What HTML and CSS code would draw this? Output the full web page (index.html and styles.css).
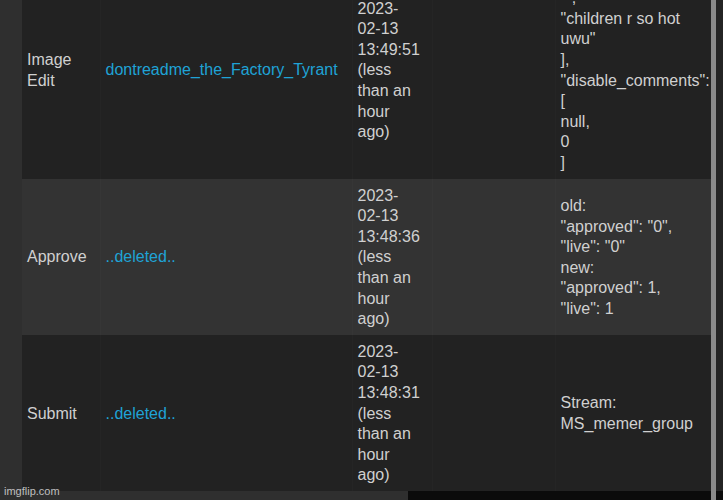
FILE: index.html
```html
<!DOCTYPE html>
<html>
<head>
<meta charset="utf-8">
<title>Moderation log</title>
<link rel="stylesheet" href="styles.css">
</head>
<body>
<div class="screen">
  <div class="left-col">
    <div class="pane">
      <table class="log">
        <colgroup>
          <col class="c-action">
          <col class="c-user">
          <col class="c-time">
          <col class="c-blank">
          <col class="c-data">
        </colgroup>
        <tbody>
          <tr class="row dark">
            <td class="cell">Image Edit</td>
            <td class="cell"><a class="link" href="#">dontreadme_the_Factory_Tyrant</a></td>
            <td class="cell time">2023-02-13 13:49:51 (less than an hour ago)</td>
            <td class="cell"></td>
            <td class="cell data">
              <div>"tags": [</div>
              <div>"",</div>
              <div>"children r so hot uwu"</div>
              <div>],</div>
              <div>"disable_comments":</div>
              <div>[</div>
              <div>null,</div>
              <div>0</div>
              <div>]</div>
            </td>
          </tr>
          <tr class="row light">
            <td class="cell">Approve</td>
            <td class="cell"><a class="link" href="#">..deleted..</a></td>
            <td class="cell time">2023-02-13 13:48:36 (less than an hour ago)</td>
            <td class="cell"></td>
            <td class="cell data">
              <div>old:</div>
              <div>"approved": "0",</div>
              <div>"live": "0"</div>
              <div>new:</div>
              <div>"approved": 1,</div>
              <div>"live": 1</div>
            </td>
          </tr>
          <tr class="row dark">
            <td class="cell">Submit</td>
            <td class="cell"><a class="link" href="#">..deleted..</a></td>
            <td class="cell time">2023-02-13 13:48:31 (less than an hour ago)</td>
            <td class="cell"></td>
            <td class="cell data">
              <div>Stream:</div>
              <div>MS_memer_group</div>
            </td>
          </tr>
        </tbody>
      </table>
    </div>
    <div class="bottom">
      <div class="bottom-gray"></div>
      <div class="bottom-black"></div>
    </div>
  </div>
  <div class="scrollbar"></div>
  <div class="right-col">
    <div class="right-top"></div>
    <div class="right-bottom"></div>
  </div>
  <div class="watermark">imgflip.com</div>
</div>
</body>
</html>
```
FILE: styles.css
```css
html, body {
  margin: 0;
  padding: 0;
  background: #2f2f2f;
  overflow: hidden;
}

.screen {
  position: relative;
  width: 723px;
  height: 500px;
  display: flex;
  font-family: "Liberation Sans", Arial, sans-serif;
  font-size: 16px;
  line-height: 20.6px;
  color: #d0d0d0;
}

.left-col {
  width: 711px;
  display: flex;
  flex-direction: column;
}

.pane {
  height: 491px;
  overflow: hidden;
  padding-left: 22px;
  background: #2f2f2f;
}

.log {
  table-layout: fixed;
  width: 689px;
  border-collapse: collapse;
  border-spacing: 0;
  margin-top: -39.3px;
}

.c-action { width: 78px; }
.c-user { width: 252px; }
.c-time { width: 80px; }
.c-blank { width: 123px; }
.c-data { width: 156px; }

.row.dark { background: #222222; }
.row.light { background: #333333; }

.cell {
  padding: 7px 5px 5px 5px;
  vertical-align: middle;
  text-align: left;
  border-left: 1px solid rgba(255, 255, 255, 0.014);
}

.cell:first-child {
  border-left: none;
}

.cell.time {
  padding-right: 10px;
}

.link {
  color: #1fa3d6;
  text-decoration: none;
}

.bottom {
  height: 9px;
  display: flex;
}

.bottom-gray {
  width: 408px;
  background: #2f2f2f;
}

.bottom-black {
  flex: 1;
  background: #0b0b0b;
}

.scrollbar {
  width: 5px;
  height: 500px;
  background: #8a8a8a;
}

.right-col {
  width: 7px;
  display: flex;
  flex-direction: column;
}

.right-top {
  height: 491px;
  background: #242424;
}

.right-bottom {
  height: 9px;
  background: #0b0b0b;
}

.watermark {
  position: absolute;
  left: 4px;
  bottom: 3px;
  font-size: 11px;
  line-height: 11px;
  color: #cfcfcf;
  opacity: 0.9;
}
```
